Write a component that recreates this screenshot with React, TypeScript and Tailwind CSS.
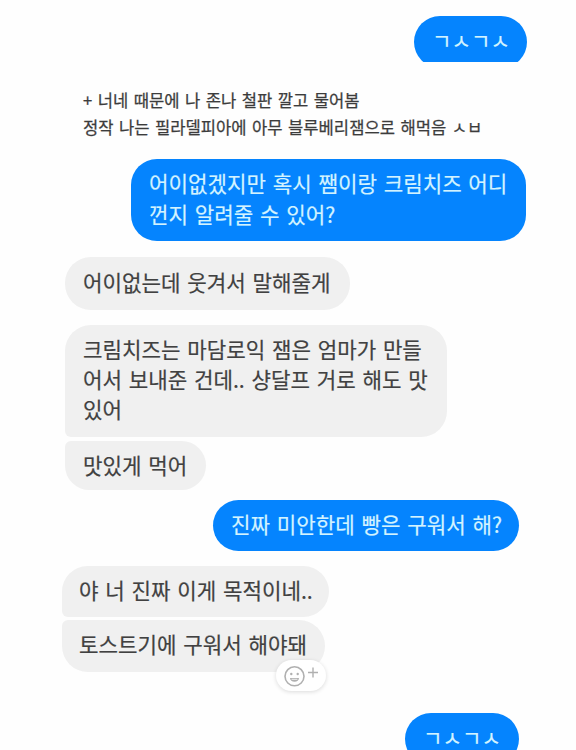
import type { ReactNode } from "react";

const BUBBLE =
  "flex flex-col justify-center whitespace-nowrap text-[21.2px] [word-spacing:2px] [-webkit-text-stroke:0.2px]";
const SENT = "self-start bg-[#0584fe] text-[#d3f3ff]";
const RECEIVED = "self-start bg-[#f0f0f0] text-[#414141]";

function Bubble({
  sent = false,
  className,
  children,
}: {
  sent?: boolean;
  className: string;
  children: ReactNode;
}) {
  return (
    <div className={`${BUBBLE} ${sent ? SENT : RECEIVED} ${className}`}>
      {children}
    </div>
  );
}

function ReactionButton() {
  return (
    <div className="absolute left-[214px] top-[40px] flex h-[31px] w-[50px] items-center justify-center rounded-full bg-white shadow-[0_1px_4px_rgba(0,0,0,0.14)]">
      <svg width="38" height="26" viewBox="0 0 38 26" fill="none" stroke="#b0b0b0">
        <circle cx="12.5" cy="13.3" r="9.5" strokeWidth="1.6" />
        <circle cx="9.3" cy="11" r="1.2" fill="#b0b0b0" stroke="none" />
        <circle cx="15.7" cy="11" r="1.2" fill="#b0b0b0" stroke="none" />
        <path d="M8 15h9a4.5 3.8 0 0 1-9 0z" fill="#b0b0b0" stroke="none" />
        <path d="M9.6 16.3h5.8" stroke="#fff" strokeWidth="0.8" />
        <path d="M31 4.5v10M26 9.5h10" strokeWidth="1.4" />
      </svg>
    </div>
  );
}

export default function App() {
  return (
    <main className="flex h-[750px] w-[576px] flex-col overflow-hidden bg-[#fefefe] pt-4 font-['Noto_Sans_CJK_KR',sans-serif]">
      <div className="ml-[414px] h-[46px] w-[113px] shrink-0 overflow-hidden">
        <Bubble sent className="h-[52px] w-[113px] rounded-[26px] pb-[5px] pl-[18px] leading-6">
          <span>ㄱㅅㄱㅅ</span>
        </Bubble>
      </div>

      <div className="ml-[83px] mt-[25px] h-[72px] shrink-0 whitespace-nowrap text-[16.6px] leading-[27px] text-[#3c3c3c] [word-spacing:1.75px] [-webkit-text-stroke:0.25px]">
        <p>+ 너네 때문에 나 존나 철판 깔고 물어봄</p>
        <p>정작 나는 필라델피아에 아무 블루베리잼으로 해먹음 ㅅㅂ</p>
      </div>

      <Bubble sent className="ml-[131px] h-[82px] w-[395px] shrink-0 rounded-[26px] pb-[3px] pl-[18px] leading-[30.5px]">
        <span>어이없겠지만 혹시 쨈이랑 크림치즈 어디</span>
        <span>껀지 알려줄 수 있어?</span>
      </Bubble>

      <Bubble className="ml-[65px] mt-4 h-[53px] w-[285px] shrink-0 rounded-[26px] pb-[4px] pl-[18px] leading-[30px]">
        <span>어이없는데 웃겨서 말해줄게</span>
      </Bubble>

      <Bubble className="ml-[65px] mt-[15px] h-[112px] w-[382px] shrink-0 rounded-[26px] rounded-bl-[6px] pb-[4px] pl-[18px] leading-[30px]">
        <span>크림치즈는 마담로익 잼은 엄마가 만들</span>
        <span>어서 보내준 건데.. 샹달프 거로 해도 맛</span>
        <span>있어</span>
      </Bubble>

      <Bubble className="ml-[65px] mt-1 h-[49px] w-[141px] shrink-0 rounded-[25px] rounded-tl-[6px] pb-px pl-[18px] leading-[30px]">
        <span>맛있게 먹어</span>
      </Bubble>

      <Bubble sent className="ml-[213px] mt-[10px] h-[51px] w-[306px] shrink-0 rounded-[26px] pb-[3px] pl-[18px] leading-[30px]">
        <span>진짜 미안한데 빵은 구워서 해?</span>
      </Bubble>

      <Bubble className="ml-[62px] mt-[15px] h-[51px] w-[267px] shrink-0 rounded-[26px] rounded-bl-[6px] pb-[3px] pl-[17px] leading-[30px]">
        <span>야 너 진짜 이게 목적이네..</span>
      </Bubble>

      <Bubble className="relative ml-[62px] mt-[3px] h-[52px] w-[263px] shrink-0 rounded-[26px] rounded-tl-[6px] pb-[4px] pl-[17px] leading-[30px]">
        <span>토스트기에 구워서 해야돼</span>
        <ReactionButton />
      </Bubble>

      <Bubble sent className="ml-[405px] mt-[41px] h-[52px] w-[114px] shrink-0 rounded-[26px] pb-[5px] pl-[18px] leading-6">
        <span>ㄱㅅㄱㅅ</span>
      </Bubble>
    </main>
  );
}
